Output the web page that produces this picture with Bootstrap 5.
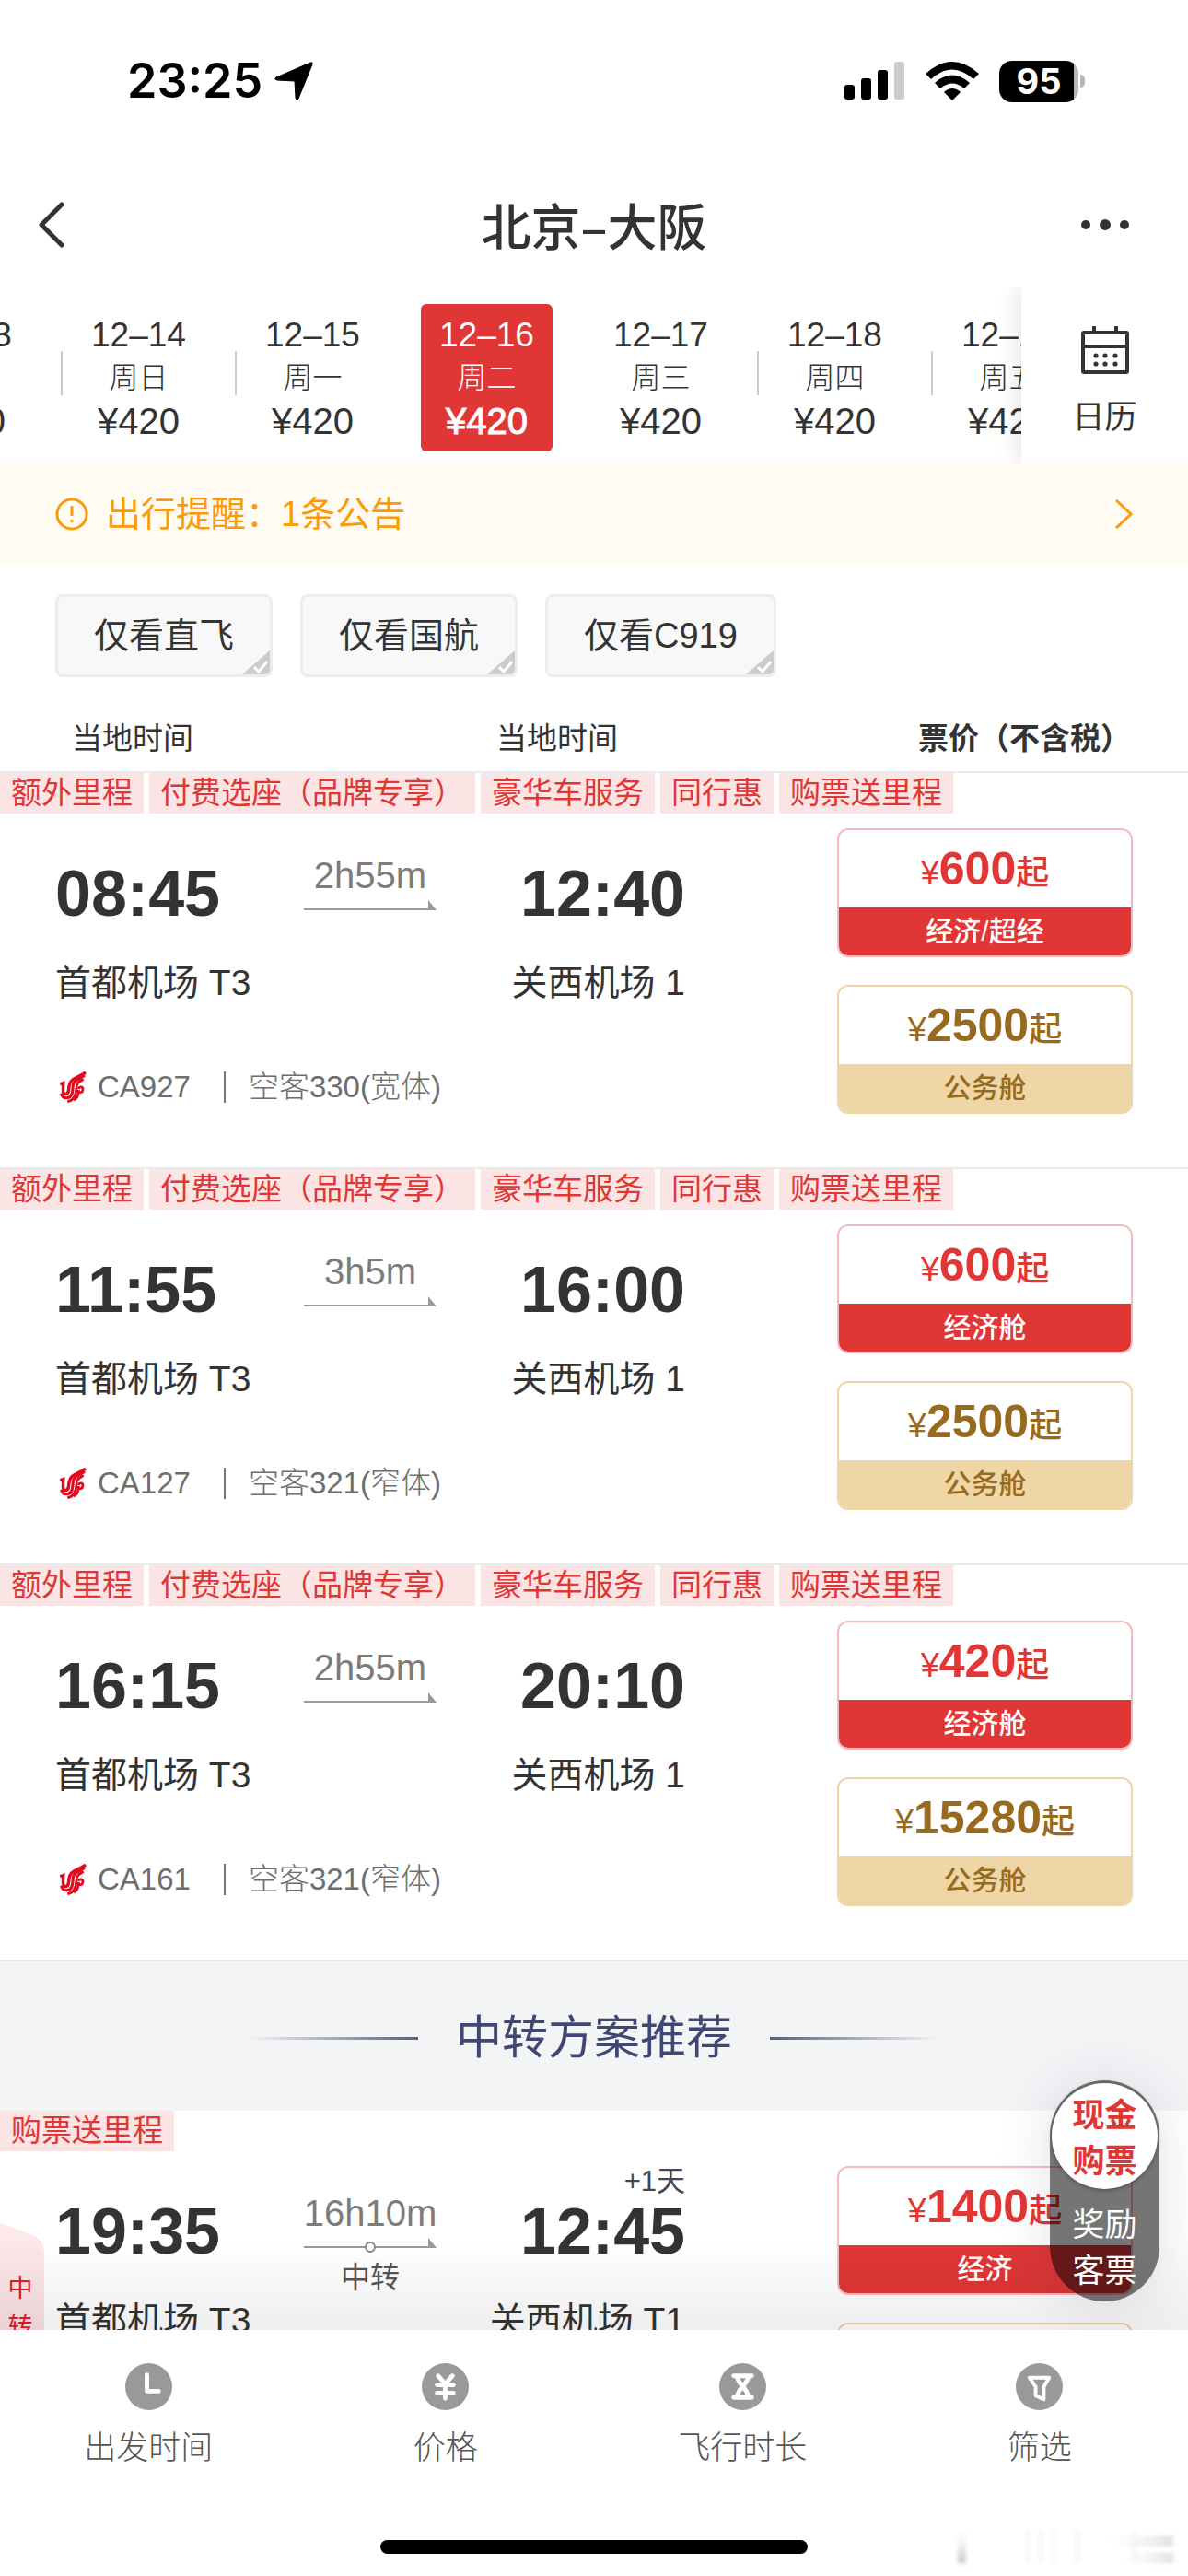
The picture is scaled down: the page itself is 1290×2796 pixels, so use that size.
<!DOCTYPE html>
<html lang="zh-CN">
<head>
<meta charset="utf-8">
<meta name="viewport" content="width=device-width, initial-scale=1">
<title>北京–大阪 航班列表</title>
<link rel="stylesheet" href="https://cdn.jsdelivr.net/npm/bootstrap@5.3.0/dist/css/bootstrap.min.css">
<style>
  :root { --air-red: #e03636; --ink: #333; --gold: #976a20; --sand: #eed6a6; }
  body { font-family: "Liberation Sans", "Noto Sans CJK SC", sans-serif; color: var(--ink); background: #fff; line-height: 1; }
  button { font-family: inherit; color: inherit; }
  .plain-btn { border: 0; background: none; padding: 0; }

  .status-bar { height: 176px; padding: 0 112px 0 138px; color: #000; }
  .clock { font: 600 52px/60px Inter, sans-serif; margin-right: 12px; }
  .wifi { margin: 0 22px; }
  .battery { height: 45px; width: 86px; border-radius: 14px; background: linear-gradient(90deg, #000 94%, #b8b8b8 94%); color: #fff; font: 700 38px/45px Inter, sans-serif; text-align: center; }
  .battery-tip { width: 5px; height: 14px; margin-left: 2px; border-radius: 0 7px 7px 0; background: #b8b8b8; }

  .top-bar { height: 136px; padding: 0 60px 0 38px; }
  .top-bar h1 { font-family: "Noto Sans CJK SC", sans-serif; font-size: 54px; font-weight: 500; line-height: 60px; }
  .slot-left { width: 82px; }
  .slot-right { width: 60px; }

  .date-strip { padding: 18px 0 13px; min-width: 0; }
  .date-track { margin-left: -110px; }
  .day-btn { width: 143px; height: 160px; border-radius: 6px; text-align: center; flex: none; white-space: nowrap; }
  .day-btn span { display: block; line-height: 47px; font-size: 40px; }
  .day-btn .day-date { font-size: 37px; }
  .day-btn .day-week { font-size: 32px; font-weight: 300; }
  .day-btn.chosen { background: var(--air-red); color: #fff; }
  .day-btn.chosen .day-price { -webkit-text-stroke: 1px #fff; }
  .day-rule { flex: none; width: 2px; height: 48px; margin: 0 11px 10px 33px; background: #ccc; }
  .day-rule.off { background: none; }
  .cal-panel { width: 181px; flex: none; padding-top: 11px; gap: 26px; font-size: 35px; line-height: 40px; background: #fff; box-shadow: -6px 0 20px rgba(0,0,0,.09); clip-path: inset(0 0 0 -30px); }

  .notice { height: 110px; padding: 0 60px; gap: 19px; background: #fffaf2; color: #fb9b0c; font-size: 38px; line-height: 44px; text-decoration: none; }
  .notice:hover { color: #fb9b0c; }

  .chips { padding: 32px 60px 31px; gap: 30px; }
  .chip { position: relative; overflow: hidden; height: 90px; padding: 0 39px; line-height: 84px; font-size: 38px; color: var(--ink); background: #f8f8f8; border: 3px solid #ededed; border-radius: 8px; }
  .chip-corner { position: absolute; right: 0; bottom: 0; }

  .col-heads { display: grid; grid-template-columns: 461fr 458fr 233px; padding: 12px 60px 11px 78px; font-size: 33px; line-height: 48px; }

  .flight { border-top: 2px solid #ebebed; }
  .tags { gap: 6px; }
  .tag { background: #fbe4e4; color: var(--air-red); font-size: 33px; line-height: 44px; padding: 0 12px; }
  .flight-main { padding: 16px 60px 58px; }
  .legs { display: grid; grid-template-columns: 270fr 144px 270fr 165fr; padding-top: 31px; }
  .clock-time { font-size: 70px; font-weight: 700; line-height: 80px; }
  .airport { font-size: 39px; line-height: 46px; margin-top: 34px; white-space: nowrap; }
  .span-time { font-size: 40px; line-height: 40px; color: #7c7c7c; margin: 0 -20px; }
  .path-arrow { display: block; margin-top: 7px; width: 144px; height: 16px; }
  .stop-note { font-size: 32px; line-height: 40px; margin-top: 7px; color: #555; }
  .plus-day { position: absolute; right: 0; top: -31px; font-size: 31px; line-height: 34px; font-weight: 400; color: #444654; white-space: nowrap; }
  .plane-info { margin-top: 70px; font-size: 33px; line-height: 40px; font-weight: 300; color: #6e6e6e; }
  .plane-info i { width: 2px; height: 34px; background: #777; margin: 0 25px 0 36px; }
  .fares { width: 321px; flex: none; gap: 30px; }
  .fare { border: 2px solid #f5bcbf; border-radius: 12px; height: 140px; overflow: hidden; background: #fff; color: var(--air-red); padding: 0; display: flex; flex-direction: column; }
  .fare-sum { height: 84px; width: 100%; display: flex; align-items: baseline; justify-content: center; line-height: 84px; font-size: 36px; font-weight: 500; }
  .fare-sum b { font-size: 50px; }
  .fare-cabin { flex: none; width: 100%; background: var(--air-red); color: #fff; font-size: 30px; font-weight: 500; line-height: 52px; height: 52px; }
  .fare.biz { border-color: var(--sand); color: var(--gold); }
  .fare.biz .fare-cabin { background: var(--sand); color: var(--gold); }

  .transfer-head { height: 164px; background: #f3f4f6; border-top: 2px solid #e6e8ea; gap: 41px; padding-top: 4px; }
  .transfer-head h2 { color: #3f4872; font-size: 50px; font-weight: 400; line-height: 60px; }
  .fade-rule { width: 183px; height: 3px; background: linear-gradient(90deg, rgba(84,93,135,0), #545d87); }
  .fade-rule.flip { background: linear-gradient(270deg, rgba(84,93,135,0), #545d87); }
  .ribbon { position: absolute; left: 0; top: 122px; width: 48px; color: #e8172c; font-size: 27px; line-height: 42px; padding-top: 50px; background: linear-gradient(#fdeaea, #fbdfe1); clip-path: path("M0 0 L36 13 Q48 19 48 34 L48 400 L0 400 Z"); }
  .ribbon span { display: block; width: 44px; text-align: center; }
  .bottom-shade { position: absolute; left: 0; right: 0; bottom: 0; height: 100px; background: linear-gradient(rgba(0,0,0,0), rgba(0,0,0,.065)); pointer-events: none; }

  .pay-switch { position: absolute; right: 31px; bottom: 31px; width: 119px; height: 240px; border-radius: 60px; padding: 3px 2px; background: rgba(0,0,0,.54); box-shadow: 0 4px 60px rgba(40,50,80,.14); }
  .pay-switch button { display: block; width: 115px; height: 115px; padding-top: 4px; border-radius: 58px; font-size: 35px; line-height: 50px; color: #fff; }
  .pay-switch .pay-on { background: #fff; color: var(--air-red); font-weight: 700; box-shadow: 0 1px 5px rgba(0,0,0,.35); }

  .tab-bar { height: 267px; background: #fff; padding-top: 36px; }
  .tab-bar button { font-size: 35px; line-height: 44px; font-weight: 300; color: #555; }
  .tab-bar button svg { display: block; margin: 0 auto 19px; }
  .home-pill { position: absolute; left: 32%; right: 32%; bottom: 24px; height: 15px; border-radius: 8px; background: #000; }
  .smear { position: absolute; right: 8px; bottom: 8px; }
</style>
<script src="https://cdn.jsdelivr.net/npm/bootstrap@5.3.0/dist/js/bootstrap.bundle.min.js"></script>
</head>
<body class="vh-100 d-flex flex-column overflow-hidden m-0">

<svg width="0" height="0" class="position-absolute" aria-hidden="true">
  <symbol id="phoenix" viewBox="0 0 85 98">
    <g fill="none" stroke="#e30a20">
      <path stroke-width="10" d="M3 40 L13 36 C12 58 10 71 20 71 C31 71 29 58 31 46 C35 20 56 22 83 3"/>
      <path stroke-width="9" d="M80 12 C62 27 44 25 43 47 C42 70 38 83 23 83 C12 83 8 76 7 68"/>
      <path stroke-width="8" d="M76 24 C60 34 55 36 54 52 C53 76 44 91 26 94"/>
      <path stroke-width="8" d="M60 55 C64 45 75 48 74 57 C73 66 65 67 64 62 M61 58 C61 76 54 86 46 90"/>
    </g>
  </symbol>
  <symbol id="corner" viewBox="0 0 30 26">
    <path d="M30 0 V26 H0 Z" fill="#ccc"/><path d="M13 18 L18 23 L27 12" fill="none" stroke="#fff" stroke-width="3"/>
  </symbol>
  <symbol id="path-line" viewBox="0 0 144 16">
    <path d="M0 10 H142" stroke="#999" stroke-width="2"/><path d="M135 0 L144 11 H135 Z" fill="#999"/>
  </symbol>
</svg>

<div class="status-bar d-flex align-items-center flex-shrink-0">
  <span class="clock">23:25</span>
  <svg width="44" height="44" viewBox="0 0 44 44"><path d="M40 2 Q43 1 42 4 L27 41 Q25 44 24 40 L23 22 L4 21 Q0 20 3 18 Z" fill="#000" stroke="#000" stroke-width="1"/></svg>
  <div class="ms-auto d-flex align-items-center">
    <svg width="66" height="42" viewBox="0 0 66 42"><rect y="25" width="11" height="16" rx="3"/><rect x="18" y="18" width="11" height="23" rx="3"/><rect x="36" y="9" width="11" height="32" rx="3"/><rect x="54" width="11" height="41" rx="3" fill="#ccc"/></svg>
    <svg class="wifi" width="58" height="42" viewBox="0 0 58 42"><path d="M29 42 L20 33 Q29 25 38 33 Z"/><path d="M10 23 Q29 6 48 23 L42 29 Q29 18 16 29 Z"/><path d="M0 13 Q29 -13 58 13 L52 19 Q29 -2 6 19 Z"/></svg>
    <div class="battery">95</div><div class="battery-tip"></div>
  </div>
</div>

<header class="top-bar d-flex align-items-center justify-content-between flex-shrink-0">
  <button class="plain-btn slot-left text-start" aria-label="返回"><svg width="34" height="52" viewBox="0 0 34 52"><path d="M29 4 L7 26 L29 48" fill="none" stroke="#333" stroke-width="5" stroke-linecap="round" stroke-linejoin="round"/></svg></button>
  <h1 class="m-0">北京–大阪</h1>
  <button class="plain-btn slot-right text-end" aria-label="更多"><svg width="56" height="16" viewBox="0 0 56 16" fill="#333"><circle cx="5" cy="8" r="5"/><circle cx="26" cy="8" r="6"/><circle cx="47" cy="8" r="5"/></svg></button>
</header>

<nav class="d-flex flex-shrink-0" aria-label="日期">
  <div class="date-strip flex-fill overflow-hidden">
    <div class="date-track d-flex align-items-center">
      <button class="plain-btn day-btn"><span class="day-date">12–13</span><span class="day-week">周六</span><span class="day-price">¥420</span></button>
      <i class="day-rule"></i>
      <button class="plain-btn day-btn"><span class="day-date">12–14</span><span class="day-week">周日</span><span class="day-price">¥420</span></button>
      <i class="day-rule"></i>
      <button class="plain-btn day-btn"><span class="day-date">12–15</span><span class="day-week">周一</span><span class="day-price">¥420</span></button>
      <i class="day-rule off"></i>
      <button class="plain-btn day-btn chosen"><span class="day-date">12–16</span><span class="day-week">周二</span><span class="day-price">¥420</span></button>
      <i class="day-rule off"></i>
      <button class="plain-btn day-btn"><span class="day-date">12–17</span><span class="day-week">周三</span><span class="day-price">¥420</span></button>
      <i class="day-rule"></i>
      <button class="plain-btn day-btn"><span class="day-date">12–18</span><span class="day-week">周四</span><span class="day-price">¥420</span></button>
      <i class="day-rule"></i>
      <button class="plain-btn day-btn"><span class="day-date">12–19</span><span class="day-week">周五</span><span class="day-price">¥420</span></button>
    </div>
  </div>
  <button class="plain-btn cal-panel d-flex flex-column align-items-center justify-content-center position-relative">
    <svg width="54" height="54" viewBox="0 0 54 54" fill="none" stroke="#333" stroke-width="4"><rect x="3" y="8" width="48" height="43" rx="1"/><path d="M3 23 H51 M15 8 V1 M39 8 V1"/><g fill="#333" stroke="none"><circle cx="17" cy="33" r="2.6"/><circle cx="27" cy="33" r="2.6"/><circle cx="38" cy="33" r="2.6"/><circle cx="17" cy="42" r="2.6"/><circle cx="27" cy="42" r="2.6"/><circle cx="38" cy="42" r="2.6"/></g></svg>
    <span>日历</span>
  </button>
</nav>

<a href="#notice" class="notice d-flex align-items-center flex-shrink-0">
  <svg width="36" height="36" viewBox="0 0 36 36" fill="none" stroke="#fb9b0c" stroke-width="3"><circle cx="18" cy="18" r="16"/><path d="M18 9 V20 M18 24 V27"/></svg>
  <span>出行提醒：1条公告</span>
  <svg class="ms-auto" width="20" height="34" viewBox="0 0 20 34"><path d="M2 2 L18 17 L2 32" fill="none" stroke="#fb9b0c" stroke-width="3"/></svg>
</a>

<main class="flex-fill overflow-hidden position-relative">
  <div class="chips d-flex">
    <div><input type="checkbox" class="btn-check" id="f1"><label class="chip d-block" for="f1">仅看直飞<svg class="chip-corner" width="30" height="26"><use href="#corner"/></svg></label></div>
    <div><input type="checkbox" class="btn-check" id="f2"><label class="chip d-block" for="f2">仅看国航<svg class="chip-corner" width="30" height="26"><use href="#corner"/></svg></label></div>
    <div><input type="checkbox" class="btn-check" id="f3"><label class="chip d-block" for="f3">仅看C919<svg class="chip-corner" width="30" height="26"><use href="#corner"/></svg></label></div>
  </div>
  <div class="col-heads"><span>当地时间</span><span>当地时间</span><span class="fw-bold text-nowrap">票价（不含税）</span></div>

  <article class="flight">
    <div class="tags d-flex"><span class="tag">额外里程</span><span class="tag">付费选座（品牌专享）</span><span class="tag">豪华车服务</span><span class="tag">同行惠</span><span class="tag">购票送里程</span></div>
    <div class="flight-main d-flex">
      <div class="flex-fill">
        <div class="legs">
          <div><div class="clock-time">08:45</div><div class="airport">首都机场 T3</div></div>
          <div class="text-center"><div class="span-time">2h55m</div><svg class="path-arrow"><use href="#path-line"/></svg></div>
          <div class="text-end"><div class="clock-time">12:40</div><div class="airport">关西机场 1</div></div>
        </div>
        <div class="plane-info d-flex align-items-center"><svg class="mx-1" width="30" height="34"><use href="#phoenix"/></svg><span class="ms-2">CA927</span><i></i><span>空客330(宽体)</span></div>
      </div>
      <div class="fares d-flex flex-column">
        <button class="fare"><span class="fare-sum">¥<b>600</b>起</span><span class="fare-cabin">经济/超经</span></button>
        <button class="fare biz"><span class="fare-sum">¥<b>2500</b>起</span><span class="fare-cabin">公务舱</span></button>
      </div>
    </div>
  </article>

  <article class="flight">
    <div class="tags d-flex"><span class="tag">额外里程</span><span class="tag">付费选座（品牌专享）</span><span class="tag">豪华车服务</span><span class="tag">同行惠</span><span class="tag">购票送里程</span></div>
    <div class="flight-main d-flex">
      <div class="flex-fill">
        <div class="legs">
          <div><div class="clock-time">11:55</div><div class="airport">首都机场 T3</div></div>
          <div class="text-center"><div class="span-time">3h5m</div><svg class="path-arrow"><use href="#path-line"/></svg></div>
          <div class="text-end"><div class="clock-time">16:00</div><div class="airport">关西机场 1</div></div>
        </div>
        <div class="plane-info d-flex align-items-center"><svg class="mx-1" width="30" height="34"><use href="#phoenix"/></svg><span class="ms-2">CA127</span><i></i><span>空客321(窄体)</span></div>
      </div>
      <div class="fares d-flex flex-column">
        <button class="fare"><span class="fare-sum">¥<b>600</b>起</span><span class="fare-cabin">经济舱</span></button>
        <button class="fare biz"><span class="fare-sum">¥<b>2500</b>起</span><span class="fare-cabin">公务舱</span></button>
      </div>
    </div>
  </article>

  <article class="flight">
    <div class="tags d-flex"><span class="tag">额外里程</span><span class="tag">付费选座（品牌专享）</span><span class="tag">豪华车服务</span><span class="tag">同行惠</span><span class="tag">购票送里程</span></div>
    <div class="flight-main d-flex">
      <div class="flex-fill">
        <div class="legs">
          <div><div class="clock-time">16:15</div><div class="airport">首都机场 T3</div></div>
          <div class="text-center"><div class="span-time">2h55m</div><svg class="path-arrow"><use href="#path-line"/></svg></div>
          <div class="text-end"><div class="clock-time">20:10</div><div class="airport">关西机场 1</div></div>
        </div>
        <div class="plane-info d-flex align-items-center"><svg class="mx-1" width="30" height="34"><use href="#phoenix"/></svg><span class="ms-2">CA161</span><i></i><span>空客321(窄体)</span></div>
      </div>
      <div class="fares d-flex flex-column">
        <button class="fare"><span class="fare-sum">¥<b>420</b>起</span><span class="fare-cabin">经济舱</span></button>
        <button class="fare biz"><span class="fare-sum">¥<b>15280</b>起</span><span class="fare-cabin">公务舱</span></button>
      </div>
    </div>
  </article>

  <div class="transfer-head d-flex align-items-center justify-content-center"><i class="fade-rule"></i><h2 class="m-0">中转方案推荐</h2><i class="fade-rule flip"></i></div>

  <article class="flight border-0 position-relative">
    <div class="tags d-flex"><span class="tag">购票送里程</span></div>
    <div class="ribbon"><span>中</span><span>转</span></div>
    <div class="flight-main d-flex">
      <div class="flex-fill">
        <div class="legs">
          <div><div class="clock-time">19:35</div><div class="airport">首都机场 T3</div></div>
          <div class="text-center"><div class="span-time">16h10m</div><svg class="path-arrow" viewBox="0 0 144 16"><use href="#path-line"/><circle cx="72" cy="10" r="5" fill="#fff" stroke="#888" stroke-width="2"/></svg><div class="stop-note">中转</div></div>
          <div class="text-end"><div class="clock-time position-relative">12:45<span class="plus-day">+1天</span></div><div class="airport">关西机场 T1</div></div>
        </div>
      </div>
      <div class="fares d-flex flex-column">
        <button class="fare"><span class="fare-sum">¥<b>1400</b>起</span><span class="fare-cabin">经济</span></button>
        <button class="fare biz" aria-label="公务舱"></button>
      </div>
    </div>
  </article>
  <div class="bottom-shade"></div>
  <div class="pay-switch"><button class="plain-btn pay-on">现金<br>购票</button><button class="plain-btn mt-1">奖励<br>客票</button></div>
</main>

<footer class="tab-bar position-relative flex-shrink-0">
  <div class="row g-0 text-center">
    <button class="plain-btn col"><svg width="51" height="51" viewBox="0 0 52 52"><circle cx="26" cy="26" r="26" fill="#999"/><path d="M24 13 V31 H37" fill="none" stroke="#fff" stroke-width="5" stroke-linecap="round" stroke-linejoin="round"/></svg>出发时间</button>
    <button class="plain-btn col"><svg width="51" height="51" viewBox="0 0 52 52"><circle cx="26" cy="26" r="26" fill="#999"/><path d="M18 14 L26 23 L34 14 M17 24 H35 M17 33 H35 M26 23 V39" fill="none" stroke="#fff" stroke-width="5" stroke-linecap="round"/></svg>价格</button>
    <button class="plain-btn col"><svg width="51" height="51" viewBox="0 0 52 52"><circle cx="26" cy="26" r="26" fill="#999"/><path d="M16 14 H36 M16 38 H36 M20 15 C20 23 32 28 32 37 M32 15 C32 23 20 28 20 37" fill="none" stroke="#fff" stroke-width="5" stroke-linecap="round"/></svg>飞行时长</button>
    <button class="plain-btn col"><svg width="51" height="51" viewBox="0 0 52 52"><circle cx="26" cy="26" r="26" fill="#999"/><path d="M15 16 H37 L31 26 V40 L22 36 V26 Z" fill="none" stroke="#fff" stroke-width="4" stroke-linejoin="round"/></svg>筛选</button>
  </div>
  <div class="home-pill"></div>
  <svg class="smear" width="250" height="50" viewBox="0 0 250 50" aria-hidden="true">
    <defs>
      <linearGradient id="sv" x1="0" y1="0" x2="0" y2="1"><stop offset="0" stop-color="#fff" stop-opacity="0"/><stop offset="1" stop-color="#c4c4c4"/></linearGradient>
      <linearGradient id="sh"><stop offset="0" stop-color="#fff" stop-opacity="0"/><stop offset="1" stop-color="#c4c4c4"/></linearGradient>
      <filter id="sb"><feGaussianBlur stdDeviation="2"/></filter>
    </defs>
    <g filter="url(#sb)"><rect x="8" y="2" width="9" height="42" fill="url(#sv)"/><path d="M84 8 V44 M98 8 V44 M112 8 V44 M138 8 V44 M200 8 V44" stroke="#f5f5f5" stroke-width="4"/><rect x="160" y="16" width="82" height="3" fill="url(#sh)"/><rect x="160" y="22" width="82" height="3" fill="url(#sh)"/><rect x="180" y="34" width="62" height="3" fill="url(#sh)"/><rect x="180" y="40" width="62" height="3" fill="url(#sh)"/></g>
  </svg>
</footer>
</body>
</html>
